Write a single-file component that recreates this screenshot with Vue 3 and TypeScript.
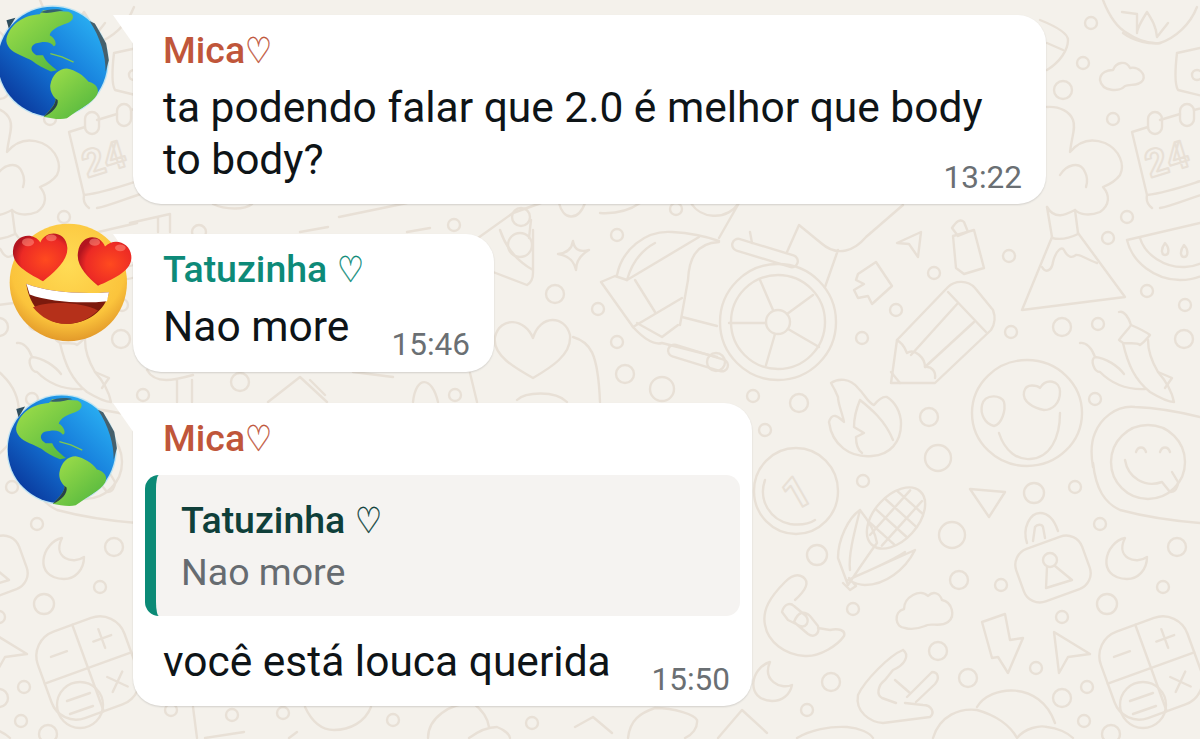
<template>
  <main class="chat">
    <!-- papel de parede -->
    <svg class="wallpaper" viewBox="0 0 1200 739" fill="none" aria-hidden="true">
      <g id="tile" stroke="#e8e0d6" stroke-width="2.4" stroke-linecap="round" stroke-linejoin="round">
        <circle v-for="(c, i) in bubbles" :key="i" :cx="c[0]" :cy="c[1]" :r="c[2]" />
        <path v-for="(d, i) in doodles" :key="'p' + i" :d="d" />

        <!-- roda -->
        <circle cx="778" cy="322" r="58" />
        <circle cx="778" cy="322" r="47" />
        <circle cx="778" cy="322" r="12" />
        <circle cx="716" cy="362" r="9" />
        <rect x="731" y="247" width="68" height="12" rx="6" transform="rotate(17 765 253)" />
        <rect x="667" y="352" width="62" height="12" rx="6" transform="rotate(17 698 358)" />

        <!-- smileys -->
        <ellipse cx="1027" cy="413" rx="55" ry="53" />
        <circle cx="1148" cy="462" r="37" />

        <!-- relogio -->
        <ellipse cx="796" cy="491" rx="42" ry="43" />
        <text class="doodle-text" x="783" y="508" font-size="44" transform="rotate(-30 796 491)">1</text>

        <!-- milho -->
        <g transform="rotate(-48 896 518)">
          <ellipse cx="896" cy="518" rx="36" ry="22" />
          <path d="M866 510H926M866 526H926M875 501V535M889 497V539M903 497V539M917 501V535" />
        </g>

        <!-- cadeado -->
        <rect x="1018" y="541" width="70" height="56" rx="17" transform="rotate(-20 1053 569)" />
        <circle cx="1050" cy="560" r="7" />

        <!-- calculadora -->
        <g transform="rotate(-20 1151 668)">
          <rect x="1105" y="622" width="92" height="92" rx="26" />
          <path d="M1151 622V714M1105 668H1197M1120 645H1137M1165 645H1184M1174 635V655M1166 683L1182 699M1182 683L1166 699" />
        </g>
        <circle cx="1143" cy="705" r="23" />
        <path d="M1130 701L1153 693M1133 714L1156 706" />

        <!-- calendario -->
        <text class="doodle-text" x="1150" y="178" font-size="38" transform="rotate(-17 1150 178)">24</text>
        <rect x="1148" y="112" width="14" height="22" rx="7" />
        <rect x="1180" y="104" width="14" height="22" rx="7" />
      </g>
      <use href="#tile" x="-1063" />
    </svg>

    <section class="messages">
      <article v-for="msg in messages" :key="msg.id" class="row">
        <!-- avatar fica por cima da bolha -->
        <svg v-if="msg.avatar === 'globe'" :class="['avatar', 'globe', msg.avatarClass]" viewBox="-10 8 336 352">
          <defs>
            <linearGradient id="ocean" x1="0.85" y1="0.1" x2="0.1" y2="0.85">
              <stop offset="0" stop-color="#29aef2" />
              <stop offset="0.5" stop-color="#1477d8" />
              <stop offset="1" stop-color="#0a3a9e" />
            </linearGradient>
            <linearGradient id="land" x1="0" y1="0" x2="0.9" y2="1">
              <stop offset="0" stop-color="#a3e04a" />
              <stop offset="1" stop-color="#4fb53e" />
            </linearGradient>
          </defs>
          <circle cx="157" cy="184" r="169" fill="#9fdcf7" opacity="0.6" />
          <circle cx="157" cy="184" r="165" fill="url(#ocean)" />
          <path d="M18 115C30 70 70 45 118 42L128 30L205 34C225 42 222 62 198 70C175 78 152 88 148 105C165 112 172 138 160 138C150 122 128 124 105 130C88 138 90 155 108 165L128 165C135 182 150 195 170 210L152 214C130 205 110 195 95 182C75 170 40 160 28 145C20 135 16 125 18 115Z" fill="url(#land)" />
          <path d="M150 255C155 225 175 205 200 205C225 210 250 225 265 245C285 250 300 265 290 285C275 310 240 325 200 355C180 360 150 355 130 350C145 335 170 310 165 295C155 285 148 270 150 255Z" fill="url(#land)" />
          <path d="M130 350C145 335 170 310 165 295L172 300C176 318 155 340 130 350Z" fill="#27404a" />
          <path d="M268 62L284 70L318 130L326 180L316 215C318 170 300 110 268 62Z" fill="#46606c" />
          <path d="M120 36C140 26 170 24 190 30C170 32 150 42 120 36Z" fill="#35606e" />
          <path d="M18 60L45 52L25 85Z" fill="#2f4d5c" />
          <path d="M150 160L185 170L220 186" stroke="#7ec94e" stroke-width="4" fill="none" />
        </svg>
        <svg v-else class="avatar heart-eyes" viewBox="25 335 375 362">
          <defs>
            <radialGradient id="face" cx="0.5" cy="0.35" r="0.65">
              <stop offset="0" stop-color="#ffdc55" />
              <stop offset="0.75" stop-color="#fbc43c" />
              <stop offset="1" stop-color="#e39a2a" />
            </radialGradient>
            <radialGradient id="heart" cx="0.6" cy="0.55" r="0.6">
              <stop offset="0" stop-color="#ff4a1f" />
              <stop offset="0.75" stop-color="#ec2a25" />
              <stop offset="1" stop-color="#b3151f" />
            </radialGradient>
          </defs>
          <circle cx="206" cy="516" r="176" fill="url(#face)" />
          <path d="M80 520C140 545 250 552 328 545C318 600 262 640 200 640C135 640 88 585 80 520Z" fill="#7c1a0d" />
          <path d="M100 590C150 570 250 575 295 600C265 628 235 640 200 640C160 640 125 622 100 590Z" fill="#b5301a" />
          <path d="M80 520C140 545 250 552 328 545L322 572C250 580 150 575 90 552Z" fill="#fff" />
          <path d="M130 512C90 490 36 465 40 420C44 372 100 362 122 396C140 355 200 362 203 412C205 450 165 485 130 512Z" fill="url(#heart)" />
          <path d="M295 526C265 500 228 465 235 425C243 370 300 368 316 408C345 378 398 398 395 445C392 485 335 508 295 526Z" fill="url(#heart)" />
          <ellipse cx="85" cy="395" rx="18" ry="12" fill="#ff8f80" opacity="0.55" />
          <ellipse cx="155" cy="382" rx="16" ry="10" fill="#ff8f80" opacity="0.55" />
          <ellipse cx="285" cy="395" rx="16" ry="11" fill="#ff8f80" opacity="0.55" />
          <ellipse cx="362" cy="412" rx="16" ry="10" fill="#ff8f80" opacity="0.55" />
        </svg>

        <div :class="['bubble', msg.size]">
          <div :class="['name', msg.color]">{{ msg.name }}<span class="heart">♡</span></div>

          <div v-if="msg.quote" class="quote">
            <div class="quote-name">{{ msg.quote.name }}<span class="heart">♡</span></div>
            <div class="quote-text">{{ msg.quote.text }}</div>
          </div>

          <div v-if="msg.firstLine" class="text">{{ msg.firstLine }}</div>
          <div class="last-line">
            <span class="text">{{ msg.text }}</span>
            <span class="time">{{ msg.time }}</span>
          </div>
        </div>
      </article>
    </section>
  </main>
</template>

<script setup lang="ts">
interface Quote {
  name: string
  text: string
}

interface Message {
  id: number
  name: string
  color: string
  avatar: 'globe' | 'hearts'
  avatarClass?: string
  size: string
  firstLine?: string
  text: string
  time: string
  quote?: Quote
}

const messages: Message[] = [
  {
    id: 1,
    name: 'Mica',
    color: 'rust',
    avatar: 'globe',
    avatarClass: 'first',
    size: 'wide',
    firstLine: 'ta podendo falar que 2.0 é melhor que body',
    text: 'to body?',
    time: '13:22'
  },
  {
    id: 2,
    name: 'Tatuzinha ',
    color: 'teal',
    avatar: 'hearts',
    size: 'small',
    text: 'Nao more',
    time: '15:46'
  },
  {
    id: 3,
    name: 'Mica',
    color: 'rust',
    avatar: 'globe',
    avatarClass: 'second',
    size: 'medium',
    text: 'você está louca querida',
    time: '15:50',
    quote: { name: 'Tatuzinha ', text: 'Nao more' }
  }
]

// [cx, cy, r] das bolinhas do fundo
const bubbles: number[][] = [
  [938, 458, 13], [863, 481, 6], [1075, 487, 6], [1034, 493, 10], [952, 535, 13], [1100, 524, 6],
  [1177, 547, 9], [817, 555, 10], [959, 580, 9], [1001, 585, 6], [1163, 587, 6], [1107, 604, 10],
  [1062, 617, 6], [853, 609, 6], [938, 651, 9], [1036, 668, 6], [831, 682, 9], [968, 678, 9],
  [1087, 687, 6], [1062, 698, 9], [807, 710, 6], [1084, 721, 6], [1111, 734, 9], [617, 235, 6],
  [676, 209, 6], [934, 273, 6], [1009, 256, 6], [1127, 217, 6], [1108, 238, 6], [1147, 291, 6],
  [1185, 305, 6], [598, 309, 6], [896, 310, 6], [862, 338, 6], [1011, 332, 6], [1062, 327, 9],
  [1098, 324, 6], [1184, 339, 9], [617, 342, 6], [625, 374, 9], [662, 389, 12], [753, 396, 6],
  [799, 403, 9], [1095, 399, 6], [929, 417, 9], [765, 430, 6], [555, 294, 9], [1091, 23, 6],
  [1083, 63, 6], [1063, 90, 9], [1113, 119, 6], [171, 710, 6], [232, 715, 6], [283, 713, 6],
  [393, 720, 6], [532, 723, 6], [143, 395, 6], [240, 382, 9], [455, 395, 6], [199, 232, 7],
  [454, 225, 6], [521, 217, 9], [520, 245, 12], [1197, 75, 5]
]

const doodles: string[] = [
  // carrinho
  'M617 275C622 250 645 230 672 232C690 233 705 236 719 241',
  'M627 280L699 237M627 280C632 262 642 250 655 243',
  'M601 282L615 276L627 280M601 282L633 327L682 298M635 280L655 312',
  'M719 242C695 243 689 260 688 280L680 325M682 317L717 326M633 327C645 340 655 345 662 343L717 357',
  'M637 323L662 337L678 325M750 232L752 243',
  'M760 280L773 310M813 295L787 314M819 347L788 329M766 365L775 334M729 323H766',
  // triangulo e seta
  'M787 252L799 225L821 243C838 258 855 250 866 237L903 205M838 250L825 287',
  'M897 243L921 232L918 257L909 244Z',
  'M952 228C956 222 960 218 964 222L968 232L958 236ZM953 236L974 230L984 268L964 274L956 268Z',
  'M858 274L876 262L892 286L872 304L868 296L858 298L854 290L864 284L856 280Z',
  // lapis
  'M897 340L948 287C955 280 968 280 975 288L993 310C996 318 995 324 991 330L935 383L891 383Z',
  'M948 292L986 332M911 355L958 303M925 367L974 322',
  'M897 340C905 345 905 350 907 353C915 348 925 358 925 367C932 366 936 372 935 378M891 372L900 383',
  // vulcao
  'M1052 237L1022 310L1125 297L1078 233M1052 238C1060 240 1070 238 1078 234',
  'M1042 267C1046 274 1052 270 1053 262C1056 250 1062 246 1064 250C1068 258 1072 258 1076 255C1080 254 1088 260 1097 263',
  // melancia
  'M1127 240L1200 223M1127 240C1132 262 1155 280 1180 280C1190 280 1198 278 1205 274M1140 238C1145 255 1165 268 1185 267C1192 267 1198 265 1204 262',
  'M1165 243C1160 250 1162 255 1165 255C1169 255 1170 248 1165 243ZM1184 245C1179 252 1181 257 1184 257C1188 257 1189 250 1184 245Z',
  // pimentas
  'M1119 312C1124 310 1129 318 1131 325M1119 340C1125 332 1128 330 1131 325C1138 328 1146 332 1150 335C1146 340 1143 343 1140 345C1136 342 1130 344 1123 343C1122 342 1120 341 1119 340Z',
  'M1123 343C1128 365 1135 380 1150 392C1160 398 1168 402 1174 402C1172 392 1165 380 1158 372C1152 362 1148 350 1148 340',
  'M1080 343C1086 342 1092 348 1095 357C1090 360 1094 372 1100 372C1110 382 1125 390 1145 389M1095 357C1106 358 1118 366 1124 374M1158 372L1172 378L1165 388',
  // smiley de coracao
  'M999 433C1005 452 1018 460 1030 459C1050 458 1060 438 1060 413',
  'M982 405C985 393 1002 395 1004 402C1006 410 1002 424 994 426C985 424 980 414 982 405Z',
  'M1024 392C1026 382 1038 386 1040 388C1046 378 1060 380 1060 392C1060 404 1052 410 1044 410C1034 408 1022 402 1024 392Z',
  // fogo
  'M831 383C838 378 850 378 858 388C866 396 868 403 874 405C878 400 882 396 887 397C895 402 901 412 901 424C901 442 890 455 872 456C850 458 832 445 829 422C832 412 838 416 844 422C842 412 838 404 838 397C836 392 834 388 831 383Z',
  'M860 400C855 412 854 420 854 427L864 433L856 437C856 445 858 450 862 453M860 400C870 408 885 420 893 440',
  // blob e rosto lingua
  'M1093 467C1090 450 1092 440 1095 433C1100 420 1115 405 1135 407C1160 408 1180 412 1200 417C1225 422 1250 425 1270 430M1093 463C1096 490 1105 503 1120 510C1150 518 1175 521 1200 523C1225 528 1250 530 1270 535',
  'M1125 460C1128 478 1145 488 1162 482M1136 452C1138 446 1144 446 1146 452M1160 452C1162 446 1168 446 1170 452M1162 482L1170 492C1175 492 1178 488 1178 482L1172 472',
  // relogio
  'M765 480C758 500 770 520 790 524C805 526 812 522 815 520',
  // folhas do milho
  'M848 585L838 558C838 540 848 518 860 510C868 520 875 530 877 543C868 555 858 570 848 585ZM848 580L915 550C905 570 885 585 865 585C858 585 852 582 848 580ZM860 510C855 530 848 555 850 570M848 580C870 570 890 562 905 552M843 583L850 590L856 586L849 578',
  // cadeado
  'M1027 543C1022 528 1030 513 1040 513C1050 513 1055 522 1058 531M1033 541L1035 527C1037 524 1042 524 1043 527L1045 538',
  'M1047 567L1046 588L1072 580L1055 566',
  // lua
  'M1125 538C1105 542 1095 578 1127 579C1138 579 1147 570 1147 557C1136 565 1115 558 1125 538Z',
  'M770 662C750 668 745 700 772 701C782 701 790 695 792 685C780 690 762 680 770 662Z',
  // setas
  'M970 489L1005 492L989 517Z',
  'M1054 632L1090 654L1068 657L1059 673Z',
  'M982 622L1005 614L1010 640L1023 638L1008 673L998 657L992 658Z',
  // nuvens
  'M905 628C895 628 893 612 904 609C904 597 920 588 928 596C934 590 940 594 942 600C952 602 956 616 948 622C940 628 930 622 925 626C920 628 912 630 905 628Z',
  'M1100 80C1100 72 1108 70 1113 70C1116 62 1126 60 1130 68C1138 66 1146 74 1143 80C1140 86 1130 84 1125 86C1120 92 1102 92 1100 80Z',
  // mao
  'M803 577C797 573 790 577 785 582C770 597 762 610 765 625C768 642 785 655 805 656C820 657 838 645 844 636C846 630 838 628 830 630L818 628',
  'M782 612C784 604 790 602 794 606L806 616C810 622 806 628 800 626L788 620ZM794 622C798 612 804 610 810 616L818 626C820 634 814 638 808 634ZM803 577C810 582 806 590 795 600',
  'M903 650C890 655 865 680 858 695C855 712 870 722 883 723L930 717C935 713 932 705 923 705L905 703M903 650C910 655 905 665 893 670L885 680C878 685 876 695 882 698L896 703M895 680L910 693M907 697L932 672C938 672 940 678 935 684L916 702',
  // esquerda e topo direito
  'M1103 0C1110 18 1118 28 1127 33C1140 42 1150 44 1160 43C1175 38 1190 25 1197 7',
  'M1122 12L1137 14L1137 33M1147 12C1152 20 1156 26 1157 37M1168 23L1157 37M1123 33C1135 42 1150 44 1160 43M1147 12C1142 20 1137 28 1137 33',
  'M1040 20C1060 28 1068 34 1068 40C1068 50 1060 62 1047 70M1047 43L1063 50',
  'M1047 107C1060 106 1070 112 1073 120C1076 128 1072 135 1070 152C1080 140 1092 138 1105 143C1120 150 1125 165 1120 175C1115 182 1108 185 1103 187C1110 195 1110 205 1100 212C1090 216 1080 215 1075 210C1065 215 1055 220 1047 207',
  'M1060 175C1066 165 1080 160 1085 172C1088 178 1087 184 1086 187',
  'M1047 207L1052 237M1075 210L1078 233',
  'M1160 208C1172 206 1190 198 1210 192C1230 186 1250 182 1262 178M1152 208C1148 205 1146 200 1147 195L1132 132L1148 127M1160 120L1180 114M1194 110L1262 92',
  'M1147 195C1170 192 1190 184 1210 178',
  'M1177 53L1200 48C1215 46 1240 50 1260 70M1177 53C1175 70 1175 85 1178 90L1260 110',
  // faixas entre as bolhas
  'M130 223L170 214L170 232M158 217L158 232M339 217L407 203M300 232L328 227M407 232L430 228',
  'M478 238L513 213L541 203M531 220L529 238M559 203C563 220 578 222 585 203M600 213C615 214 630 210 640 203M691 203C700 218 725 222 739 203M739 203L719 238',
  'M213 204C225 210 245 210 252 204',
  'M147 370C155 385 175 380 193 375M177 380V402M192 380V402M268 402L300 377L327 402M310 380L325 395M413 402C416 375 432 376 438 402M470 373L477 402M353 372L393 377',
  // coracao e curvas
  'M533 338C525 318 500 316 495 337C492 355 515 368 533 378C550 368 572 355 570 335C565 315 540 314 533 338Z',
  'M573 337C590 342 598 352 600 402M517 400C525 392 555 390 567 402',
  'M493 272L527 285C532 282 533 278 533 273V230M500 230C505 245 515 260 533 270',
  'M573 241C574 248 578 253 589 250C580 255 576 262 576 270C574 262 570 256 558 254C568 253 572 248 573 241Z',
  // fundo
  'M193 707L197 738M244 732L205 738M305 707C312 722 322 730 334 730C350 730 365 722 371 707M297 732L289 738',
  'M428 738C428 718 450 703 473 703C485 712 488 720 489 727M469 738C480 730 490 727 497 727C505 730 510 735 510 738',
  'M575 727L593 717L612 733M628 738C630 720 640 713 655 708C675 708 695 715 697 720C698 728 692 735 685 738M718 738L742 710L767 733',
  'M797 738C810 730 830 726 847 727C860 728 870 733 873 738',
  'M933 738C940 715 960 708 977 710C995 715 1010 725 1017 738C1025 728 1040 725 1047 727C1058 728 1068 733 1073 738M977 707C990 685 1040 680 1055 723'
]
</script>

<style scoped>
.chat {
  position: relative;
  width: 1200px;
  height: 739px;
  overflow: hidden;
  background: #f4f1eb;
  font-family: Roboto, "Noto Sans", sans-serif;
}

.wallpaper {
  position: absolute;
  inset: 0;
  width: 1200px;
  height: 739px;
}

.doodle-text {
  font-family: Roboto, sans-serif;
  font-weight: 700;
  fill: none;
  stroke-width: 2;
}

.messages {
  position: relative;
  display: flex;
  flex-direction: column;
  gap: 30px;
  padding: 15px 0 0 133px;
}

.row {
  position: relative;
}

.avatar {
  position: absolute;
  z-index: 2;
}

.globe.first {
  left: -136px;
  top: -12px;
  width: 112px;
  height: 117px;
}

.globe.second {
  left: -126px;
  top: -10px;
  width: 110px;
  height: 115px;
}

.heart-eyes {
  left: -125px;
  top: -12px;
  width: 125px;
  height: 121px;
}

.bubble {
  position: relative;
  box-sizing: border-box;
  padding: 13px 24px 18px 30px;
  background: #fff;
  border-radius: 0 28px 28px 28px;
  box-shadow: 0 1px 2px rgba(0, 0, 0, 0.14);
}

.bubble::before {
  content: "";
  position: absolute;
  left: -20px;
  top: 0;
  width: 21px;
  height: 30px;
  background: #fff;
  clip-path: polygon(0 0, 100% 0, 100% 100%);
}

.wide { width: 913px; }
.small { width: 361px; min-height: 138px; }
.medium { width: 619px; margin-top: 1px; padding-right: 22px; }

.name {
  margin-bottom: 10px;
  font-size: 37.5px;
  font-weight: 500;
  line-height: 44px;
}

.heart {
  display: inline-block;
  font-size: 36px;
  font-weight: 400;
  line-height: 1;
  transform: scaleX(0.84);
  transform-origin: left center;
  -webkit-text-stroke: 0.4px currentColor;
}

.rust { color: #c0563a; }
.teal { color: #0d8a78; }

.quote {
  margin: 15px -10px 20px -18px;
  padding: 23px 16px 18px 25px;
  background: #f5f3f1;
  border-left: 11px solid #0b8a76;
  border-radius: 14px;
}

.quote-name {
  font-size: 37.5px;
  font-weight: 500;
  line-height: 44px;
  color: #0f3f3a;
}

.quote-text {
  margin-top: 4px;
  font-size: 37.5px;
  line-height: 52px;
  color: #666b70;
}

.text {
  font-size: 42.5px;
  line-height: 52px;
  color: #0e1417;
}

.last-line {
  display: flex;
  justify-content: space-between;
  align-items: flex-start;
  height: 52px;
}

/* hora desce um pouco abaixo do texto */
.time {
  margin-top: 27px;
  font-size: 31.5px;
  line-height: 34px;
  color: #6a6f73;
}
</style>
